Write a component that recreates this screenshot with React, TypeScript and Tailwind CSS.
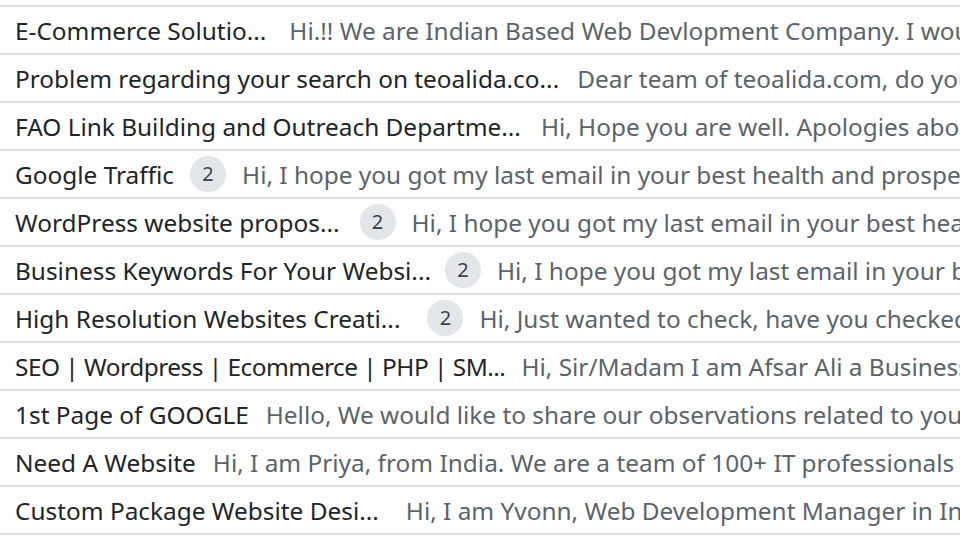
import React from "react";

interface Thread {
  id: number;
  subject: string;
  count?: number;
  snippet: string;
  gap: string;
  tight?: boolean;
}

const threads: Thread[] = [
  { id: 1, subject: "E-Commerce Solutio...", snippet: "Hi.!! We are Indian Based Web Devlopment Company. I would like to introduce", gap: "ml-[23px]" },
  { id: 2, subject: "Problem regarding your search on teoalida.co...", snippet: "Dear team of teoalida.com, do you need help with", gap: "ml-[18px]" },
  { id: 3, subject: "FAO Link Building and Outreach Departme...", snippet: "Hi, Hope you are well. Apologies about the", gap: "ml-[20px]" },
  { id: 4, subject: "Google Traffic", count: 2, snippet: "Hi, I hope you got my last email in your best health and prosperity", gap: "ml-[16px]" },
  { id: 5, subject: "WordPress website propos...", count: 2, snippet: "Hi, I hope you got my last email in your best health", gap: "ml-[20px]" },
  { id: 6, subject: "Business Keywords For Your Websi...", count: 2, snippet: "Hi, I hope you got my last email in your best health", gap: "ml-[14px]" },
  { id: 7, subject: "High Resolution Websites Creati...", count: 2, snippet: "Hi, Just wanted to check, have you checked my", gap: "ml-[27px]" },
  { id: 8, subject: "SEO | Wordpress | Ecommerce | PHP | SM...", snippet: "Hi, Sir/Madam I am Afsar Ali a Business Development", gap: "ml-[16px]", tight: true },
  { id: 9, subject: "1st Page of GOOGLE", snippet: "Hello, We would like to share our observations related to your website", gap: "ml-[17px]" },
  { id: 10, subject: "Need A Website", snippet: "Hi, I am Priya, from India. We are a team of 100+ IT professionals", gap: "ml-[17px]" },
  { id: 11, subject: "Custom Package Website Desi...", snippet: "Hi, I am Yvonn, Web Development Manager in India", gap: "ml-[27px]" },
];

function ThreadRow({ t }: { t: Thread }) {
  return (
    <div className="flex h-[48px] items-center border-t-2 border-[#dee2e6] pt-[2px] pl-[15px] whitespace-nowrap">
      <span className={`text-[#212529] ${t.tight ? "tracking-[-0.5px]" : ""}`}>{t.subject}</span>
      {t.count && (
        <span className={`${t.gap} -mt-[2px] flex h-[36px] w-[36px] shrink-0 items-center justify-center rounded-full bg-[#e2e5e9] text-[20px] text-[#3d4247]`}>
          {t.count}
        </span>
      )}
      <span className={`${t.count ? "ml-[16px]" : t.gap} text-[#5c636a]`}>{t.snippet}</span>
    </div>
  );
}

export default function App() {
  return (
    <div
      className="h-[540px] w-[960px] overflow-hidden bg-white pt-[5px] text-[24.4px] leading-none"
      style={{ fontFamily: '"Noto Sans", "Open Sans", sans-serif' }}
    >
      <div className="border-b-2 border-[#dee2e6]">
        {threads.map((t) => (
          <ThreadRow key={t.id} t={t} />
        ))}
      </div>
    </div>
  );
}
